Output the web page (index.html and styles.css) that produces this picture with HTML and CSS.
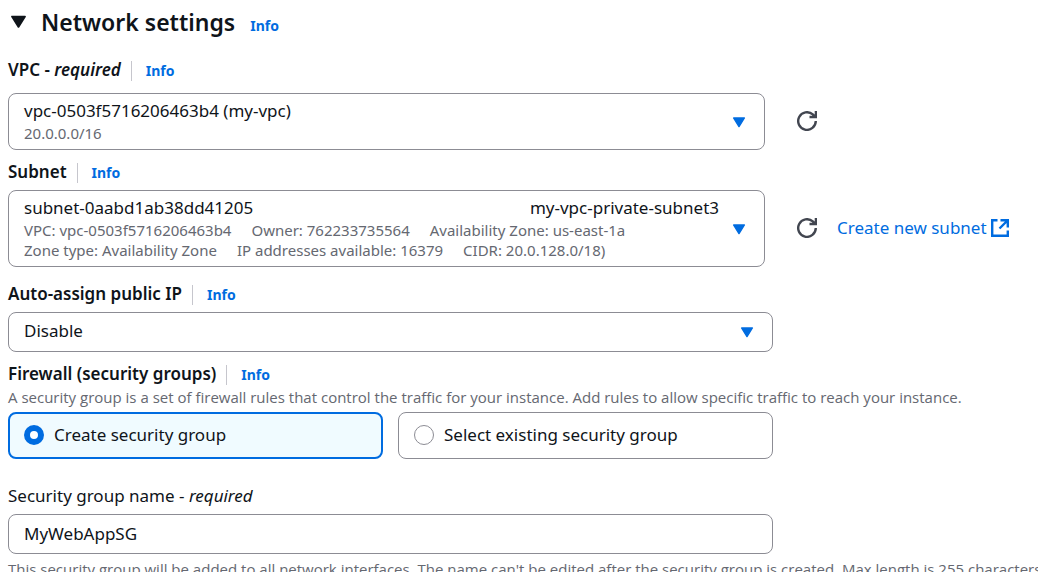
FILE: index.html
```
<!DOCTYPE html>
<html lang="en">
<head>
<meta charset="utf-8">
<meta name="viewport" content="width=device-width, initial-scale=1">
<title>Network settings</title>
<link rel="stylesheet" href="styles.css">
</head>
<body>
<svg class="sprite" aria-hidden="true">
  <symbol id="caret" viewBox="0 0 14 11"><path d="M1.600 1h10.800L7 9.600z" fill="currentColor" stroke="currentColor" stroke-width="1.400" stroke-linejoin="round"/></symbol>
  <symbol id="refresh" viewBox="0 0 20 20"><path d="M18.800 10a8.800 8.800 0 1 1-3-6.600L18 5.600M18.900 0v6h-6.400" fill="none" stroke="currentColor" stroke-width="2.400"/></symbol>
  <symbol id="external" viewBox="0 0 18 18"><path d="M6.500 1.200H1.200v15.600h15.600V11.500M9.500 1.200h7.300v7.300M16.500 1.500L8.500 9.500" fill="none" stroke="currentColor" stroke-width="2.400"/></symbol>
</svg>
<main class="panel">
  <header class="heading">
    <button class="toggle" type="button" aria-expanded="true" aria-label="Collapse network settings"><svg class="toggle-icon"><use href="#caret"/></svg></button>
    <h2 class="title">Network settings</h2>
    <a class="info" href="#">Info</a>
  </header>

  <section class="field field-vpc">
    <div class="label-row"><span class="label" id="vpc-label">VPC - <em>required</em></span><a class="info" href="#">Info</a></div>
    <div class="control-row">
      <button class="picker" type="button" aria-haspopup="listbox" aria-labelledby="vpc-label vpc-value">
        <span class="picker-text" id="vpc-value">
          <span class="picker-main"><span>vpc-0503f5716206463b4 (my-vpc)</span></span>
          <span class="meta"><span>20.0.0.0/16</span></span>
        </span>
        <svg class="caret"><use href="#caret"/></svg>
      </button>
      <div class="actions"><button class="refresh" type="button" aria-label="Refresh VPCs"><svg class="refresh-icon"><use href="#refresh"/></svg></button></div>
    </div>
  </section>

  <section class="field field-subnet">
    <div class="label-row"><span class="label" id="subnet-label">Subnet</span><a class="info" href="#">Info</a></div>
    <div class="control-row">
      <button class="picker" type="button" aria-haspopup="listbox" aria-labelledby="subnet-label subnet-value">
        <span class="picker-text" id="subnet-value">
          <span class="picker-main"><span>subnet-0aabd1ab38dd41205</span><span>my-vpc-private-subnet3</span></span>
          <span class="meta"><span>VPC: vpc-0503f5716206463b4</span><span>Owner: 762233735564</span><span>Availability Zone: us-east-1a</span></span>
          <span class="meta"><span>Zone type: Availability Zone</span><span>IP addresses available: 16379</span><span>CIDR: 20.0.128.0/18)</span></span>
        </span>
        <svg class="caret"><use href="#caret"/></svg>
      </button>
      <div class="actions">
        <button class="refresh" type="button" aria-label="Refresh subnets"><svg class="refresh-icon"><use href="#refresh"/></svg></button>
        <a class="external" href="#">Create new subnet<svg class="external-icon"><use href="#external"/></svg></a>
      </div>
    </div>
  </section>

  <section class="field field-ip">
    <div class="label-row"><label class="label" for="public-ip">Auto-assign public IP</label><a class="info" href="#">Info</a></div>
    <div class="narrow select-wrap">
      <select class="box" id="public-ip"><option>Disable</option><option>Enable</option></select>
      <svg class="caret"><use href="#caret"/></svg>
    </div>
  </section>

  <section class="field field-firewall" role="radiogroup" aria-labelledby="firewall-label">
    <div class="label-row"><span class="label" id="firewall-label">Firewall (security groups)</span><a class="info" href="#">Info</a></div>
    <p class="help">A security group is a set of firewall rules that control the traffic for your instance. Add rules to allow specific traffic to reach your instance.</p>
    <div class="narrow tiles">
      <label class="tile"><input class="radio" type="radio" name="firewall" checked>Create security group</label>
      <label class="tile"><input class="radio" type="radio" name="firewall">Select existing security group</label>
    </div>
  </section>

  <section class="field field-name">
    <label class="name-label" for="group-name">Security group name - <em>required</em></label>
    <div class="narrow"><input class="box" id="group-name" type="text" value="MyWebAppSG" aria-describedby="name-help"></div>
    <p class="help" id="name-help">This security group will be added to all network interfaces. The name can't be edited after the security group is created. Max length is 255 characters. V</p>
  </section>
</main>
</body>
</html>
```
FILE: styles.css
```
* { box-sizing: border-box; }
body {
  margin: 0;
  overflow: hidden;
  background: #fff;
  color: #0f141a;
  font: 17px/20px "Noto Sans", "Open Sans", sans-serif;
}
button, input, select { font: inherit; color: inherit; }
.sprite { display: none; }
.panel { padding: 7px 10px 0 8px; }
.heading { display: flex; align-items: center; height: 30px; }
.toggle { display: flex; padding: 0; border: 0; margin: 0 14px 0 2px; background: none; }
.toggle-icon { width: 17px; height: 14px; }
.title { margin: 0 15px 0 0; font-size: 23px; line-height: 30px; font-weight: 600; }
.info { color: #006ce0; font-size: 14px; font-weight: 700; text-decoration: none; }
.heading .info { padding-top: 8px; }
.label-row { display: flex; align-items: center; height: 20px; }
.label { padding: 0 10px 2px 0; font-weight: 600; }
.label-row .info { padding-left: 14px; border-left: 1px solid #c6c6cd; }

.field { display: flex; flex-direction: column; gap: 7px; }
.field-vpc { gap: 12px; padding-top: 24px; }
.field-subnet { padding-top: 13px; }
.field-ip { padding-top: 18px; }
.field-firewall { gap: 2px; padding-top: 13px; }
.field-name { gap: 5px; padding-top: 27px; }

.control-row { display: grid; grid-template-columns: 3fr 1fr; align-items: center; }
.narrow { width: 75%; }
.picker {
  display: flex;
  align-items: center;
  gap: 13px;
  min-width: 0;
  margin-right: 8px;
  padding: 7px 18px 6px 15px;
  border: 1px solid #8c8c94;
  border-radius: 8px;
  background: #fff;
  text-align: left;
}
.picker-text { flex: 1; }
.picker-main { display: flex; justify-content: space-between; margin-bottom: 2px; }
.meta { display: flex; gap: 20px; color: #656871; font-size: 15px; white-space: nowrap; }
.caret { flex: none; width: 14px; height: 11px; color: #006ce0; }
.actions { display: flex; align-items: center; gap: 20px; padding: 0 0 2px 24px; }
.refresh { display: flex; padding: 0; border: 0; background: none; color: #424650; }
.refresh-icon { width: 20px; height: 20px; }
.external { display: flex; align-items: center; gap: 4px; color: #006ce0; text-decoration: none; white-space: nowrap; }
.external-icon { width: 18px; height: 18px; }

.box {
  display: block;
  width: 100%;
  height: 40px;
  padding: 0 15px 2px;
  border: 1px solid #8c8c94;
  border-radius: 8px;
  background: #fff;
  appearance: none;
}
.select-wrap { display: grid; align-items: center; }
.select-wrap > * { grid-area: 1 / 1; }
.select-wrap .caret { justify-self: end; margin-right: 19px; pointer-events: none; }

.help { margin: 0; color: #656871; font-family: "Open Sans", "Noto Sans", sans-serif; font-size: 15px; white-space: nowrap; }
.tiles { display: grid; grid-template-columns: 1fr 1fr; gap: 15px; padding-top: 3px; }
.tile {
  display: flex;
  align-items: center;
  gap: 10px;
  height: 47px;
  padding: 0 15px 2px;
  border: 1px solid #8c8c94;
  border-radius: 8px;
}
.tile:has(.radio:checked) { padding: 0 14px 2px; border: 2px solid #006ce0; background: #f0fbff; }
.radio {
  flex: none;
  width: 20px;
  height: 20px;
  margin: 0;
  border: 1px solid #8c8c94;
  border-radius: 50%;
  background: #fff;
  appearance: none;
}
.radio:checked { border: 6px solid #006ce0; }
.name-label { padding-bottom: 3px; }
```
